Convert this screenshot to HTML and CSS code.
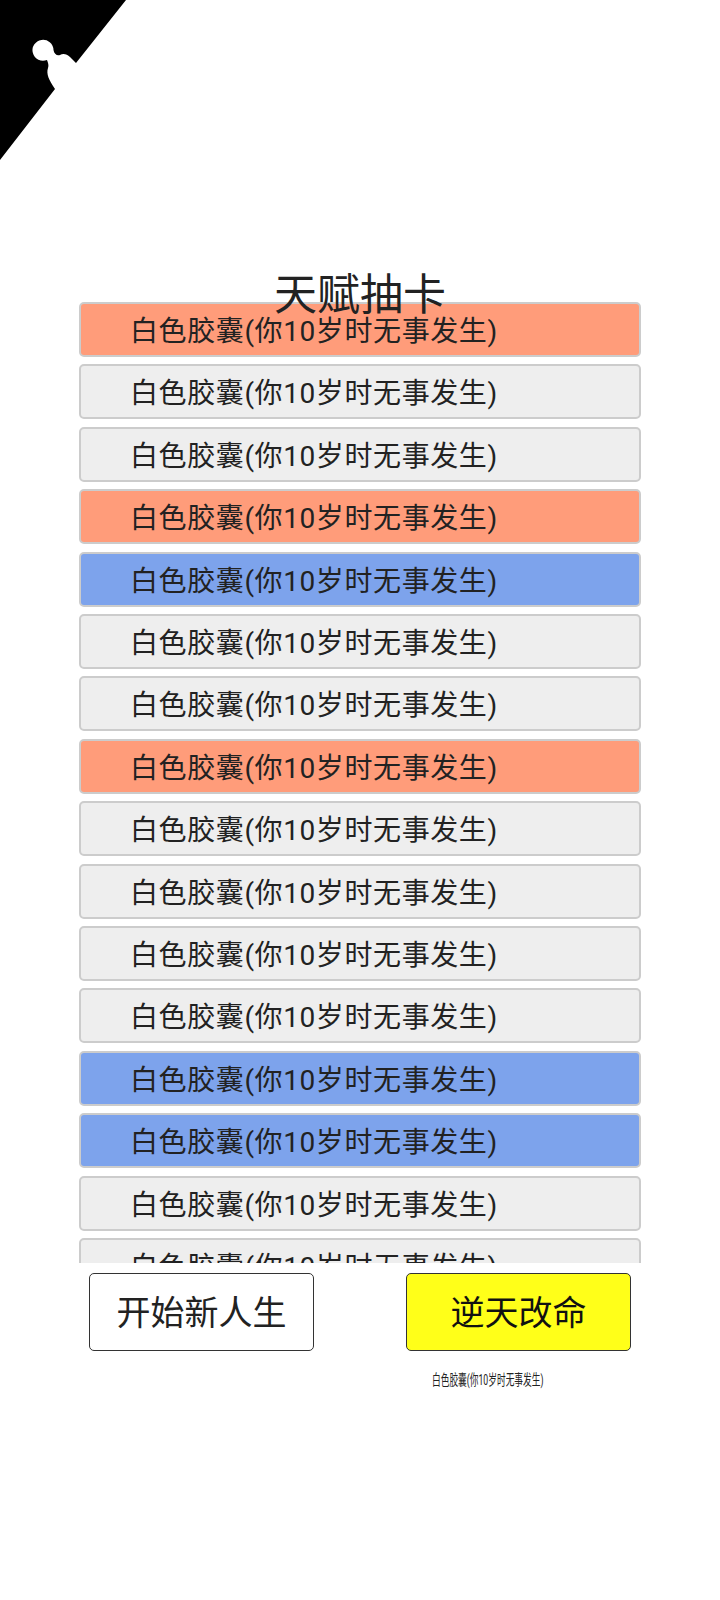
FILE: index.html
```html
<!DOCTYPE html>
<html lang="zh-CN">

<head>
  <meta charset="UTF-8">
  <meta name="viewport" content="width=device-width, initial-scale=1.0">
  <title>天赋抽卡</title>
  <link rel="stylesheet" href="styles.css">
</head>

<body>
  <!-- corner ribbon -->
  <svg class="corner" width="130" height="162" viewBox="0 0 130 162">
    <path d="M0 0H126L76 63L70 57C67 54 63 53 60 55C57 56 54 54 53.5 50A10.5 10.5 0 1 0 47 60C48 63 49 65 48 68C46 74 49 80 55 89L0 160Z" />
  </svg>

  <h1 class="title">天赋抽卡</h1>

  <div class="talent-list">
    <div class="talent orange">白色胶囊(你10岁时无事发生)</div>
    <div class="talent">白色胶囊(你10岁时无事发生)</div>
    <div class="talent">白色胶囊(你10岁时无事发生)</div>
    <div class="talent orange">白色胶囊(你10岁时无事发生)</div>
    <div class="talent blue">白色胶囊(你10岁时无事发生)</div>
    <div class="talent">白色胶囊(你10岁时无事发生)</div>
    <div class="talent">白色胶囊(你10岁时无事发生)</div>
    <div class="talent orange">白色胶囊(你10岁时无事发生)</div>
    <div class="talent">白色胶囊(你10岁时无事发生)</div>
    <div class="talent">白色胶囊(你10岁时无事发生)</div>
    <div class="talent">白色胶囊(你10岁时无事发生)</div>
    <div class="talent">白色胶囊(你10岁时无事发生)</div>
    <div class="talent blue">白色胶囊(你10岁时无事发生)</div>
    <div class="talent blue">白色胶囊(你10岁时无事发生)</div>
    <div class="talent">白色胶囊(你10岁时无事发生)</div>
    <div class="talent">白色胶囊(你10岁时无事发生)</div>
  </div>

  <div class="actions">
    <button class="btn">开始新人生</button>
    <button class="btn btn-yellow">逆天改命</button>
  </div>

  <p class="picked">白色胶囊(你10岁时无事发生)</p>
</body>

</html>
```

FILE: styles.css
```css
body {
  margin: 0;
  height: 1600px;
  overflow: hidden;
  padding-top: 271px;
  box-sizing: border-box;
  background-color: #ffffff;
  color: #222222;
  font-family: Roboto, 'Noto Sans CJK SC', sans-serif;
}

.corner {
  position: absolute;
  top: 0;
  left: 0;
  fill: #000000;
}

.title {
  position: relative;
  z-index: 1;
  height: 31px;
  margin: 0;
  font-size: 43px;
  font-weight: 400;
  line-height: 48px;
  text-align: center;
}

.talent-list {
  display: flex;
  flex-direction: column;
  gap: 7.42px;
  height: 961px;
  margin: 0 79px;
  overflow: hidden;
}

.talent {
  flex: none;
  box-sizing: border-box;
  height: 55px;
  padding-left: 49px;
  border: 2px solid #cccccc;
  border-radius: 5px;
  background-color: #eeeeee;
  font-size: 28px;
  letter-spacing: 0.6px;
  line-height: 56px;
}

.orange {
  background-color: #ff9c7a;
}

.blue {
  background-color: #7da3ec;
}

.actions {
  display: flex;
  justify-content: space-between;
  margin: 10px 89px 0 89px;
}

.btn {
  width: 225px;
  height: 78px;
  padding: 0 0 3px;
  border: 1px solid #333333;
  border-radius: 5px;
  background-color: #ffffff;
  color: #222222;
  font-family: inherit;
  font-size: 34px;
}

.btn-yellow {
  background-color: #ffff19;
  color: #111111;
}

.picked {
  width: 200px;
  margin: 19px 0 0 432px;
  font-size: 15px;
  line-height: 20px;
  white-space: nowrap;
  transform: scaleX(0.58);
  transform-origin: left center;
}
```
